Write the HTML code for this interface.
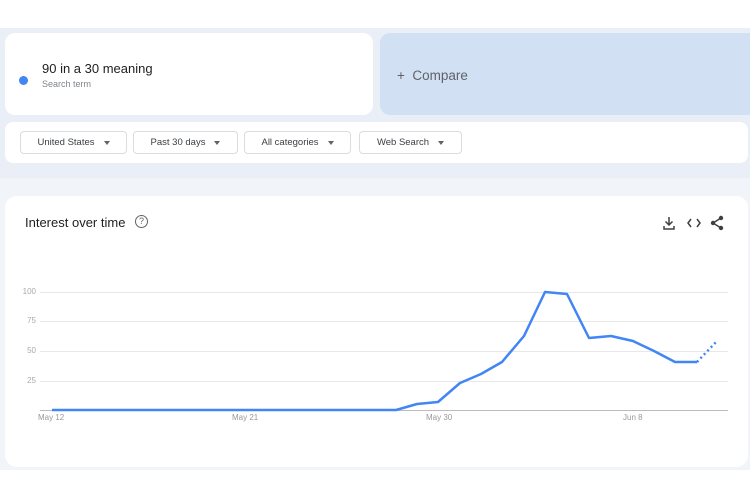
<!DOCTYPE html>
<html><head><style>
body{margin:0;width:750px;height:500px;background:#fff;font-family:"Liberation Sans",Arial,sans-serif;position:relative;overflow:hidden}
.abs{position:absolute}
.chip{position:absolute;top:131px;height:23px;border:1px solid #dadce0;border-radius:4px;background:#fff;font-size:9.5px;color:#3c4043;display:flex;align-items:center;justify-content:center;box-sizing:border-box}
.chip:after{content:"";border-left:3.5px solid transparent;border-right:3.5px solid transparent;border-top:4px solid #5f6368;margin-left:9px}
.yl{position:absolute;left:18px;width:18px;text-align:right;font-size:8px;color:#aaa}
.xl{position:absolute;top:413px;font-size:8px;color:#999}
.gl{position:absolute;left:40px;width:688px;height:1px;background:#e8e8e8}
</style></head><body>
<div class="abs" style="left:0;top:28px;width:750px;height:150px;background:#eaeef6"></div>
<div class="abs" style="left:0;top:178px;width:750px;height:292px;background:#f1f4f9"></div>
<div class="abs" style="left:5px;top:33px;width:368px;height:82px;background:#fff;border-radius:10px"></div>
<div class="abs" style="left:19px;top:76px;width:9px;height:9px;border-radius:50%;background:#4285f4"></div>
<div class="abs" style="left:42px;top:61px;font-size:13px;color:#202124">90 in a 30 meaning</div>
<div class="abs" style="left:42px;top:79px;font-size:9px;color:#80868b">Search term</div>
<div class="abs" style="left:380px;top:33px;width:370px;height:82px;background:#d2e0f3;border-radius:10px 0 0 10px"></div>
<div class="abs" style="left:397px;top:68px;font-size:13.5px;color:#5f6368">+&nbsp;&nbsp;Compare</div>
<div class="abs" style="left:5px;top:122px;width:743px;height:41px;background:#fff;border-radius:8px"></div>
<div class="chip" style="left:20px;width:107px">United States</div>
<div class="chip" style="left:133px;width:105px">Past 30 days</div>
<div class="chip" style="left:244px;width:107px">All categories</div>
<div class="chip" style="left:359px;width:103px">Web Search</div>
<div class="abs" style="left:5px;top:196px;width:743px;height:271px;background:#fff;border-radius:12px"></div>
<div class="abs" style="left:25px;top:215px;font-size:13px;color:#202124">Interest over time</div>
<div class="abs" style="left:135px;top:215px;width:11px;height:11px;border:1.3px solid #5f6368;border-radius:50%;font-size:9px;line-height:11px;text-align:center;color:#5f6368">?</div>
<svg class="abs" style="left:660px;top:214px" width="70" height="18" viewBox="0 0 70 18">
<g fill="none" stroke="#3c4043" stroke-width="1.5"><path d="M9 3v8M5.5 7.5L9 11l3.5-3.5M4 12v3h10v-3"/><path d="M31 5l-3 4 3 4M37 5l3 4-3 4"/><path d="M61 4l-8 5 8 5"/></g>
<g fill="#3c4043"><circle cx="61" cy="4" r="2.2"/><circle cx="53" cy="9" r="2.2"/><circle cx="61" cy="14" r="2.2"/></g></svg>
<div class="gl" style="top:292px"></div><div class="gl" style="top:321px"></div><div class="gl" style="top:351px"></div><div class="gl" style="top:381px"></div>
<div class="gl" style="top:410px;background:#bbb"></div>
<div class="yl" style="top:287px">100</div><div class="yl" style="top:316px">75</div><div class="yl" style="top:346px">50</div><div class="yl" style="top:376px">25</div>
<div class="xl" style="left:38px">May 12</div><div class="xl" style="left:232px">May 21</div><div class="xl" style="left:426px">May 30</div><div class="xl" style="left:623px">Jun 8</div>
<svg class="abs" style="left:0;top:0" width="750" height="500">
<polyline fill="none" stroke="#4285f4" stroke-width="2.5" stroke-linejoin="round" points="52,410 396,410 417,404 438,402 460,383 481,374 502,362 524,336 545,292 567,294 589,338 611,336 633,341 654,351 675,362 697,362"/>
<polyline fill="none" stroke="#4285f4" stroke-width="2.5" stroke-dasharray="2 3" points="697,362 717,341"/>
</svg>
</body></html>
